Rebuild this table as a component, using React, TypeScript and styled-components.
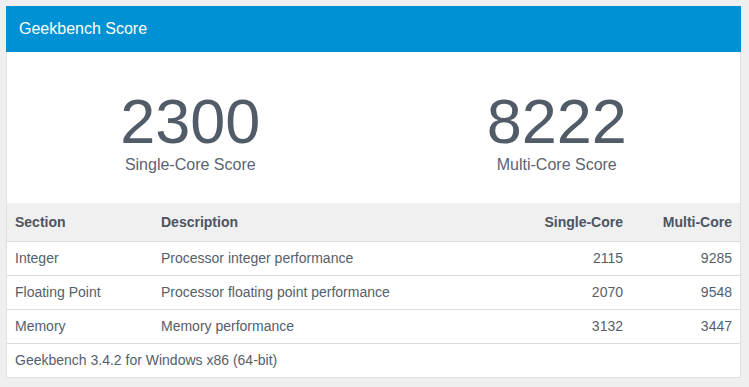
import styled, { createGlobalStyle } from "styled-components";

const GlobalStyle = createGlobalStyle`
  body {
    margin: 0;
    padding: 6px;
    background: #efefef;
    font-family: "Liberation Sans", Arial, sans-serif;
  }
`;

const Panel = styled.div`
  width: 735px;
  background: #fff;
  border: 1px solid #e0e0e0;
  border-top: none;
  box-sizing: border-box;
`;

const PanelHeader = styled.div`
  height: 46px;
  background: #0091d4;
  color: #fff;
  font-size: 16px;
  display: flex;
  align-items: center;
  padding: 0 13px;
  margin: 0 -1px;
`;

const Scores = styled.div`
  display: grid;
  grid-template-columns: 1fr 1fr;
  padding: 37px 0 28px;
`;

const ScoreBox = styled.div`
  display: flex;
  flex-direction: column;
  align-items: center;
  color: #525c69;
`;

const ScoreValue = styled.div`
  font-size: 63px;
  line-height: 64px;
`;

const ScoreLabel = styled.div`
  margin-top: 2px;
  font-size: 16px;
  line-height: 20px;
  color: #5c6470;
`;

const Table = styled.table`
  width: 100%;
  border-collapse: collapse;
  table-layout: fixed;
  font-size: 14px;
  color: #555e6b;
`;

const HeadCell = styled.th<{ $right?: boolean; $width?: number }>`
  background: #f0f0f0;
  height: 38px;
  padding: 0 8px;
  font-weight: bold;
  color: #4c5461;
  text-align: ${(p) => (p.$right ? "right" : "left")};
  width: ${(p) => (p.$width ? `${p.$width}px` : "auto")};
  box-sizing: border-box;
`;

const Cell = styled.td<{ $right?: boolean }>`
  height: 33px;
  padding: 0 8px;
  border-top: 1px solid #dcdcdc;
  text-align: ${(p) => (p.$right ? "right" : "left")};
`;

const rows = [
  { section: "Integer", desc: "Processor integer performance", single: 2115, multi: 9285 },
  { section: "Floating Point", desc: "Processor floating point performance", single: 2070, multi: 9548 },
  { section: "Memory", desc: "Memory performance", single: 3132, multi: 3447 },
];

export default function App() {
  return (
    <>
      <GlobalStyle />
      <Panel>
        <PanelHeader>Geekbench Score</PanelHeader>
        <Scores>
          <ScoreBox>
            <ScoreValue>2300</ScoreValue>
            <ScoreLabel>Single-Core Score</ScoreLabel>
          </ScoreBox>
          <ScoreBox>
            <ScoreValue>8222</ScoreValue>
            <ScoreLabel>Multi-Core Score</ScoreLabel>
          </ScoreBox>
        </Scores>
        <Table>
          <thead>
            <tr>
              <HeadCell $width={146}>Section</HeadCell>
              <HeadCell>Description</HeadCell>
              <HeadCell $right $width={110}>Single-Core</HeadCell>
              <HeadCell $right $width={109}>Multi-Core</HeadCell>
            </tr>
          </thead>
          <tbody>
            {rows.map((r) => (
              <tr key={r.section}>
                <Cell>{r.section}</Cell>
                <Cell>{r.desc}</Cell>
                <Cell $right>{r.single}</Cell>
                <Cell $right>{r.multi}</Cell>
              </tr>
            ))}
            <tr>
              <Cell colSpan={4}>Geekbench 3.4.2 for Windows x86 (64-bit)</Cell>
            </tr>
          </tbody>
        </Table>
      </Panel>
    </>
  );
}
